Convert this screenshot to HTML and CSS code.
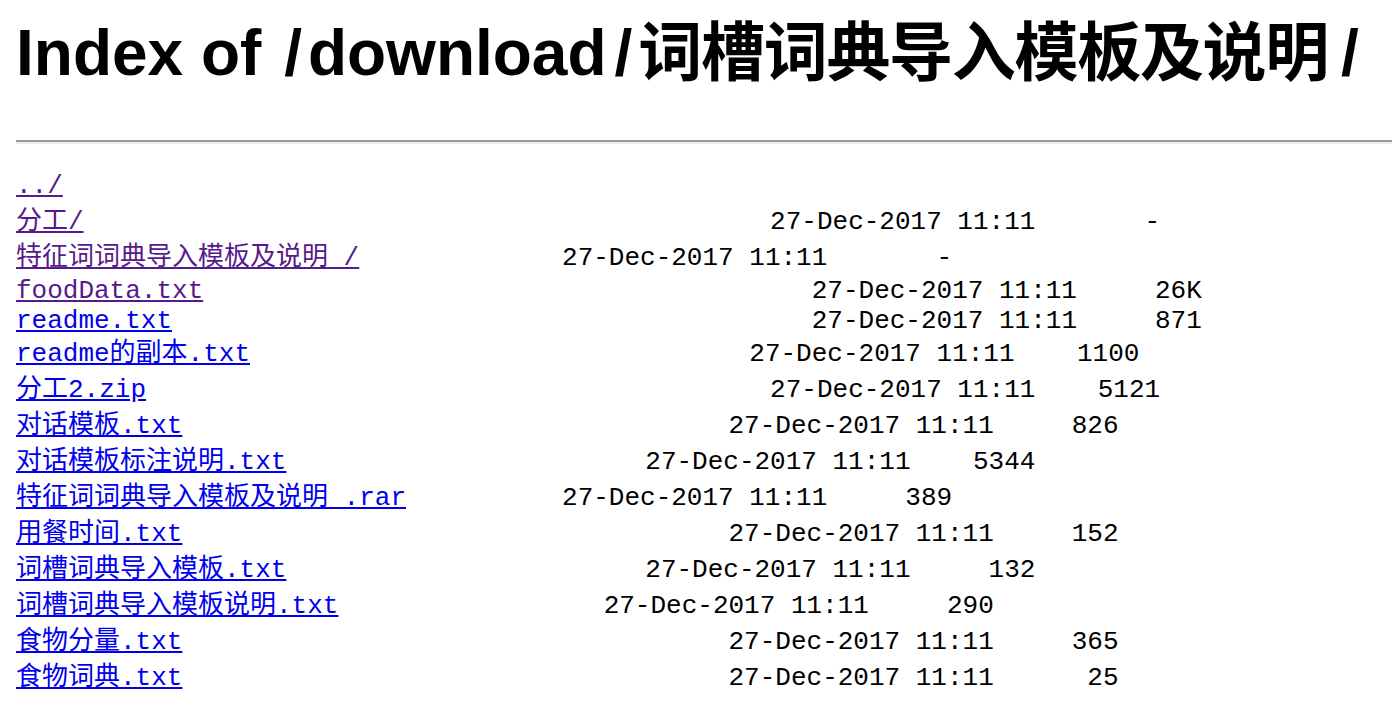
FILE: index.html
```html
<!DOCTYPE html>
<html>
<head>
<meta charset="utf-8">
<title>Index of /download/词槽词典导入模板及说明/</title>
<link rel="stylesheet" href="styles.css">
</head>
<body>
<h1 class="title">Index of <span class="slash slash-lead">/</span>download<span class="slash slash-mid">/</span><span class="cjk">词槽词典导入模板及说明</span><span class="slash slash-end">/</span></h1>
<hr class="rule">
<pre class="listing"><a class="visited wide" href="../">../</a>
<a class="visited wide" href="#">分工/</a>                                            27-Dec-2017 11:11       -
<a class="visited wide" href="#">特征词词典导入模板及说明 /</a>             27-Dec-2017 11:11       -
<a class="visited" href="#">foodData.txt</a>                                       27-Dec-2017 11:11     26K
<a href="#">readme.txt</a>                                         27-Dec-2017 11:11     871
<a class="wide" href="#">readme的副本.txt</a>                                27-Dec-2017 11:11    1100
<a class="wide" href="#">分工2.zip</a>                                        27-Dec-2017 11:11    5121
<a class="wide" href="#">对话模板.txt</a>                                   27-Dec-2017 11:11     826
<a class="wide" href="#">对话模板标注说明.txt</a>                       27-Dec-2017 11:11    5344
<a class="wide" href="#">特征词词典导入模板及说明 .rar</a>          27-Dec-2017 11:11     389
<a class="wide" href="#">用餐时间.txt</a>                                   27-Dec-2017 11:11     152
<a class="wide" href="#">词槽词典导入模板.txt</a>                       27-Dec-2017 11:11     132
<a class="wide" href="#">词槽词典导入模板说明.txt</a>                 27-Dec-2017 11:11     290
<a class="wide" href="#">食物分量.txt</a>                                   27-Dec-2017 11:11     365
<a class="wide" href="#">食物词典.txt</a>                                   27-Dec-2017 11:11      25
</pre>
</body>
</html>
```

FILE: styles.css
```css
html {
  background: #ffffff;
}

body {
  margin: 16px 0 0 16px;
  color: #000000;
  font-family: "Liberation Serif", "Noto Sans CJK SC", serif;
}

.title {
  margin: 0;
  font-family: "Liberation Sans", "Noto Sans CJK SC", sans-serif;
  font-size: 64px;
  font-weight: bold;
  line-height: 74px;
  white-space: nowrap;
}

.slash-lead {
  margin: 0 6px 0 5px;
}

.slash-mid {
  margin: 0 6px 0 8px;
}

.slash-end {
  margin-left: 13px;
}

.cjk {
  letter-spacing: -1.3px;
}

.rule {
  height: 0;
  margin: 50px 0 24px 0;
  border: 0;
  border-top: 2px solid #9a9a9a;
  border-bottom: 2px solid #eeeeee;
}

.listing {
  margin: 0;
  font-family: "Liberation Mono", "Noto Sans CJK SC", monospace;
  font-size: 26px;
  line-height: 30px;
  color: #000000;
}

.listing a {
  color: #0000ee;
  text-decoration: underline;
}

.listing a.visited {
  color: #551a8b;
}

.listing a.wide {
  line-height: 36px;
}
```
